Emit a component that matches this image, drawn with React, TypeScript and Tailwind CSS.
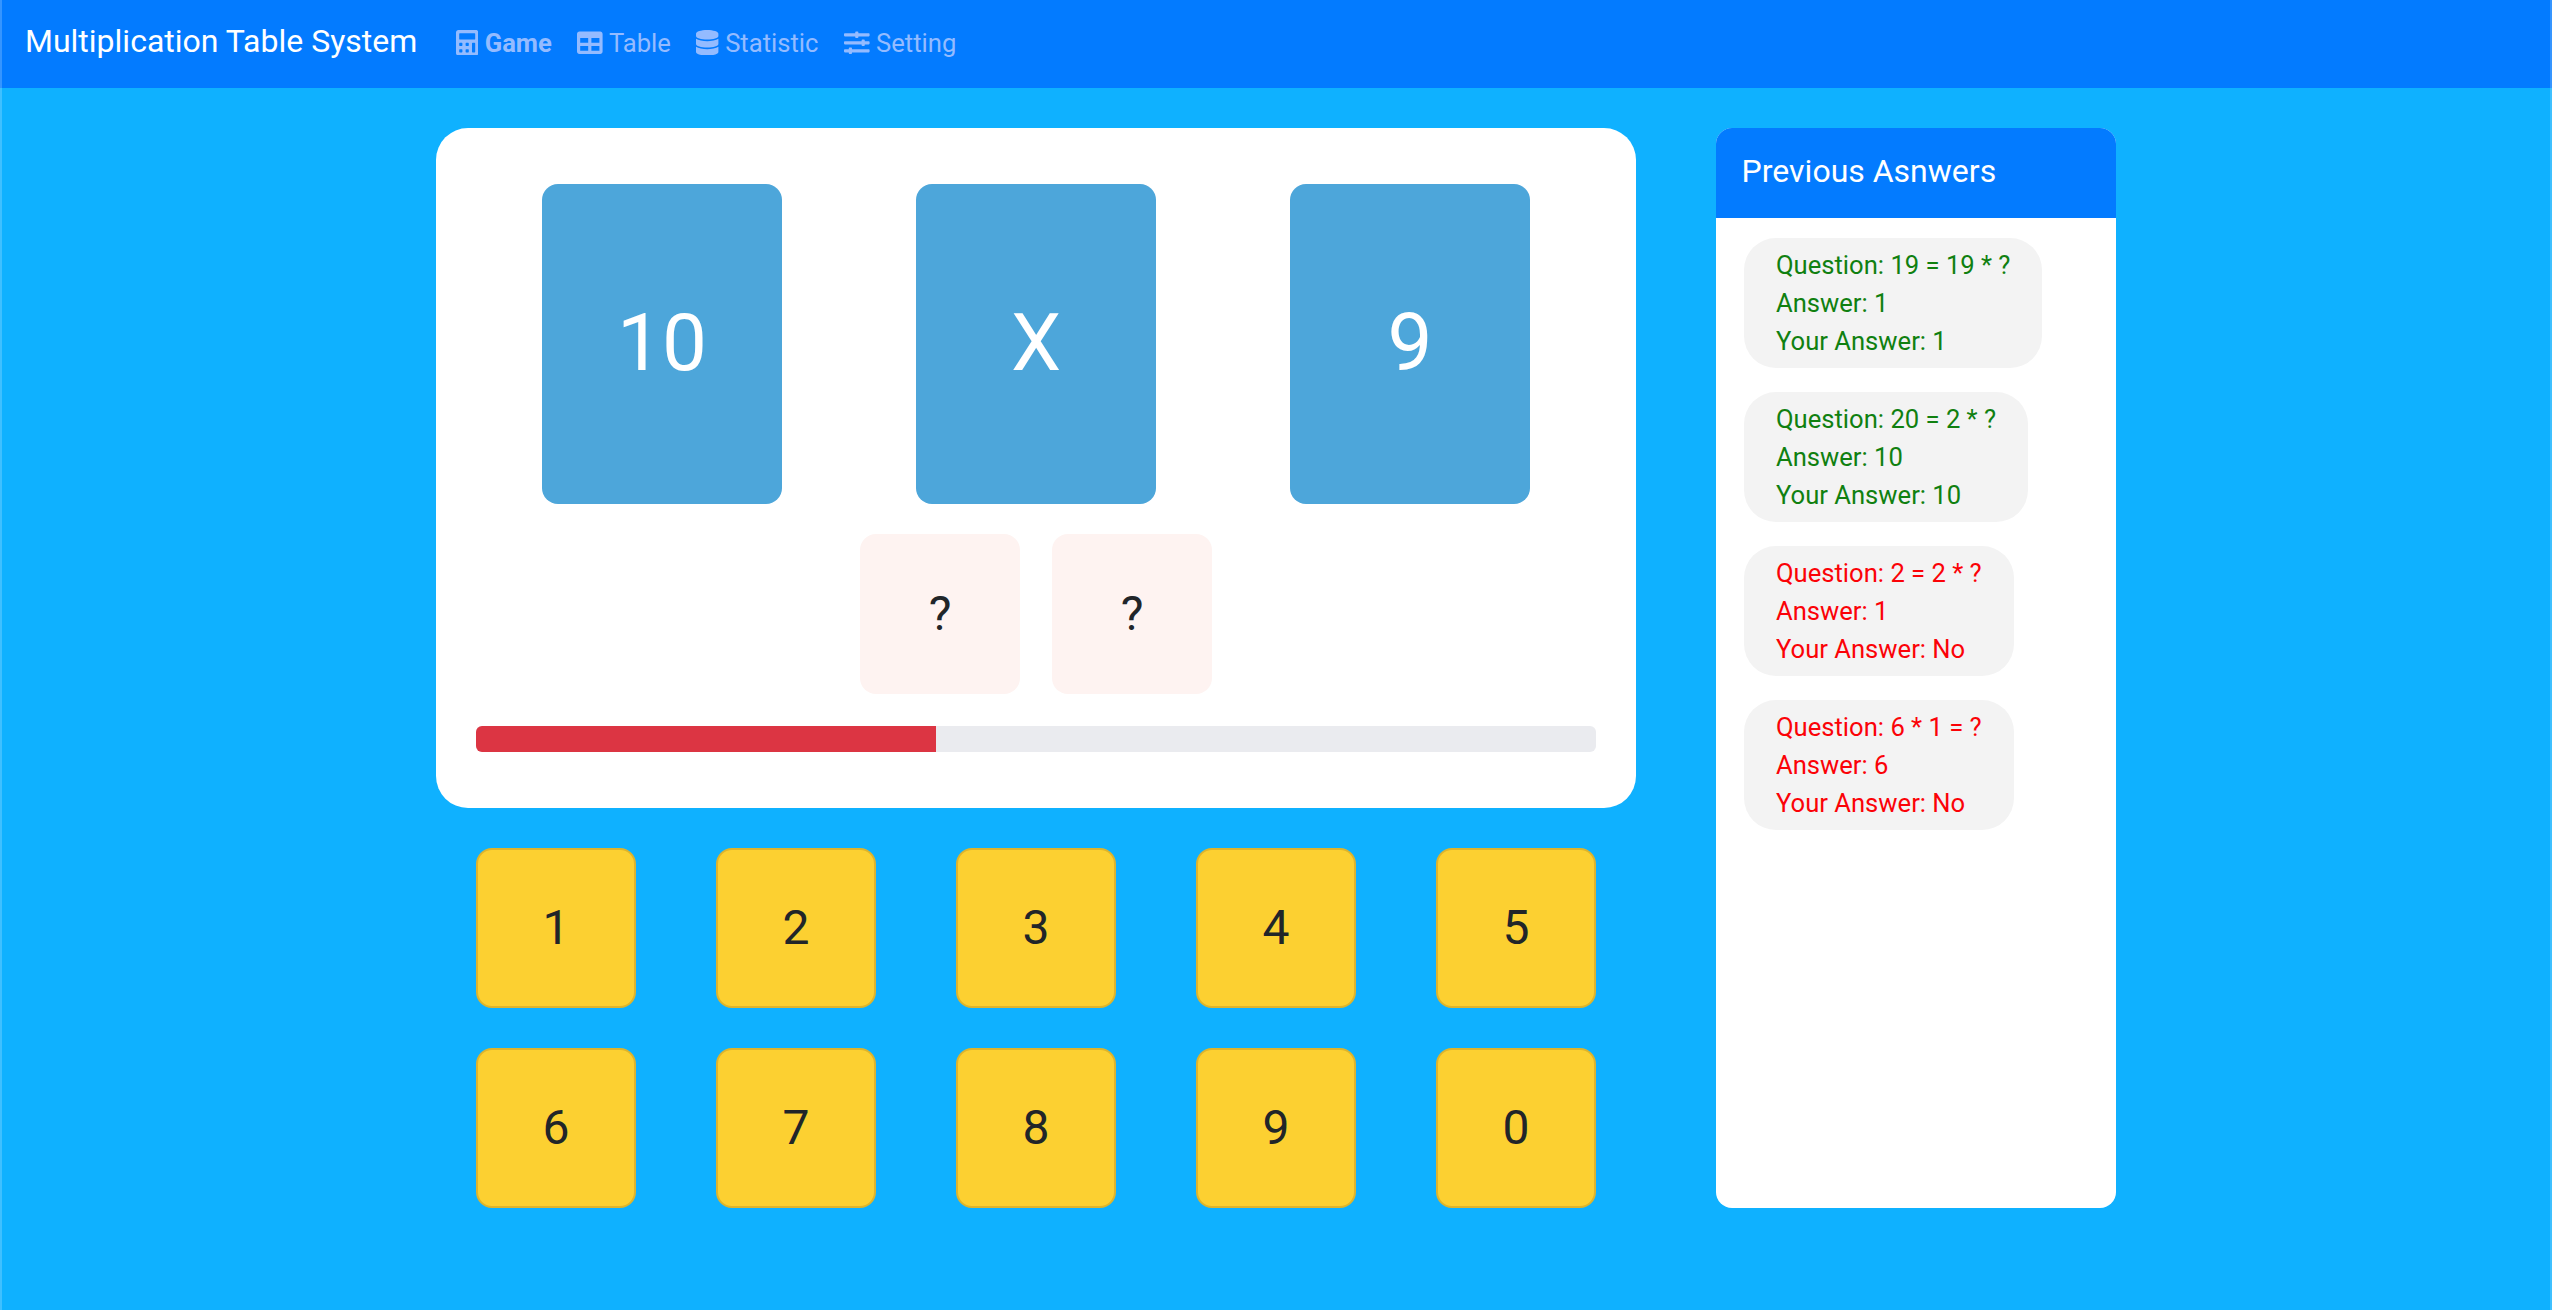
import type { ReactNode } from "react";
import { FaCalculator, FaDatabase, FaSlidersH, FaTable } from "react-icons/fa";

const keys = ["1", "2", "3", "4", "5", "6", "7", "8", "9", "0"];

const history = [
  { question: "19 = 19 * ?", answer: "1", yours: "1", correct: true },
  { question: "20 = 2 * ?", answer: "10", yours: "10", correct: true },
  { question: "2 = 2 * ?", answer: "1", yours: "No", correct: false },
  { question: "6 * 1 = ?", answer: "6", yours: "No", correct: false },
];

const progress = 41.07;

function NavItem({ icon, label, active }: { icon: ReactNode; label: string; active?: boolean }) {
  return (
    <a className={active ? "whitespace-nowrap font-bold" : "whitespace-nowrap"}>
      {icon} {label}
    </a>
  );
}

const wideIcon = "inline-block h-[25.6px] w-[25.6px] align-[-0.125em]";
const narrowIcon = "inline-block h-[25.6px] w-[22.4px] align-[-0.125em]";

function Navbar() {
  return (
    <nav className="flex h-[88px] items-baseline bg-[#037bff] pt-[17px] pl-[25px]">
      <span className="mr-[38.6px] text-[32px] leading-[48px] whitespace-nowrap text-white">
        Multiplication Table System
      </span>
      <div className="flex items-baseline gap-[25.6px] text-[25.6px] leading-[38px] text-[#94bbff]">
        <NavItem icon={<FaCalculator className={narrowIcon} />} label="Game" active />
        <NavItem icon={<FaTable className={wideIcon} />} label="Table" />
        <NavItem icon={<FaDatabase className={narrowIcon} />} label="Statistic" />
        <NavItem icon={<FaSlidersH className={wideIcon} />} label="Setting" />
      </div>
    </nav>
  );
}

function QuestionBoard() {
  return (
    <section className="h-[680px] rounded-[32px] bg-white px-[39px] pt-14">
      <div className="grid grid-cols-3 justify-items-center">
        {["10", "X", "9"].map((value) => (
          <div
            key={value}
            className="flex h-80 w-60 items-center justify-center rounded-2xl bg-[#4da6da] pb-0.5 text-[80px] leading-[120px] text-white"
          >
            {value}
          </div>
        ))}
      </div>
      <div className="mt-[30px] flex justify-center gap-8">
        {[0, 1].map((slot) => (
          <div
            key={slot}
            className="flex size-40 items-center justify-center rounded-2xl bg-[#fef3f1] text-[48px] leading-[72px]"
          >
            ?
          </div>
        ))}
      </div>
      <div className="mx-px mt-8 h-[26px] overflow-hidden rounded-md bg-[#eaebef]">
        <div className="h-full bg-[#dc3543]" style={{ width: `${progress}%` }} />
      </div>
    </section>
  );
}

function Keypad() {
  return (
    <div className="mt-10 grid grid-cols-5 justify-items-center gap-y-10">
      {keys.map((key) => (
        <button
          key={key}
          className="flex size-40 items-center justify-center rounded-2xl border-2 border-[#deb42c] bg-[#fcd031] text-[48px] leading-[72px]"
        >
          {key}
        </button>
      ))}
    </div>
  );
}

function PreviousAnswers() {
  return (
    <aside className="h-[1080px] w-[400px] overflow-hidden rounded-2xl bg-white">
      <h5 className="h-[90px] bg-[#037bff] pt-6 pl-[25.6px] text-[32px] leading-[38px] text-white">
        Previous Asnwers
      </h5>
      <ul className="flex flex-col items-start gap-6 pt-5 pl-7">
        {history.map((item) => (
          <li
            key={item.question}
            className={`rounded-[32px] bg-[#f3f3f3] px-8 py-2 text-[25.6px] leading-[38px] whitespace-nowrap ${
              item.correct ? "text-[#108010]" : "text-[#fb0207]"
            }`}
          >
            <p>Question: {item.question}</p>
            <p>Answer: {item.answer}</p>
            <p>Your Answer: {item.yours}</p>
          </li>
        ))}
      </ul>
    </aside>
  );
}

export default function App() {
  return (
    <div className="relative h-[1310px] w-full overflow-hidden bg-[#0fb1ff] font-[Roboto,sans-serif] text-[#212529]">
      <Navbar />
      <main className="flex gap-20 pt-10 pl-[436px]">
        <div className="w-[1200px]">
          <QuestionBoard />
          <Keypad />
        </div>
        <PreviousAnswers />
      </main>
      <div className="pointer-events-none absolute inset-0 border-x-2 border-white/20" />
    </div>
  );
}
